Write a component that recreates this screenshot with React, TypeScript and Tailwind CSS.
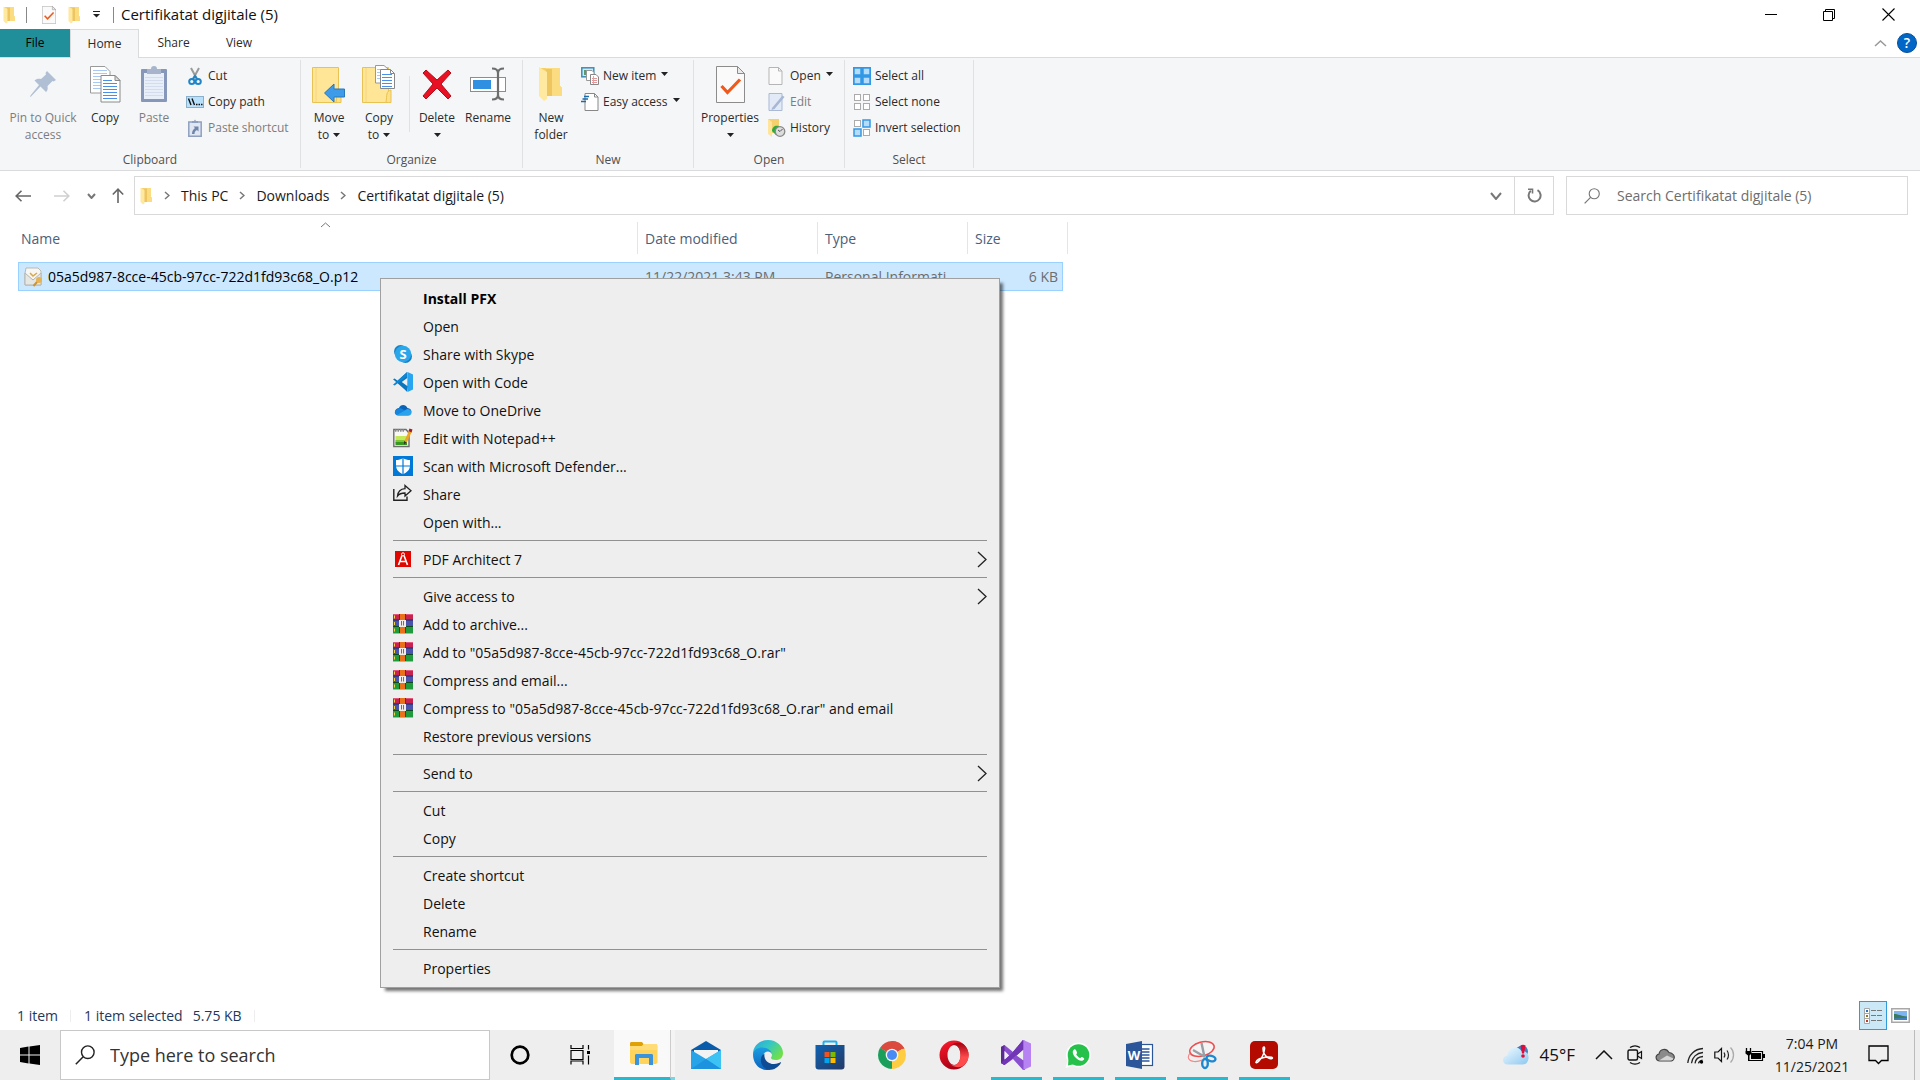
import React from "react";

type Kids = { children?: React.ReactNode };

function Svg({ w, h, box, children }: Kids & { w: number; h: number; box?: string }) {
  return (
    <svg width={w} height={h} viewBox={box ?? `0 0 ${w} ${h}`} fill="none" className="block shrink-0" aria-hidden="true">
      {children}
    </svg>
  );
}

/* ---------- shared small drawings ---------- */

function Folder({ w, h }: { w: number; h: number }) {
  return (
    <Svg w={w} h={h} box="0 0 26 36">
      <path d="M2 2H22V20L24 22V30H6Z" fill="#f4cf68" />
      <path d="M8 2H22V20L24 22V30H8Z" fill="#fbdc80" />
      <path d="M8 3H14V30H8Z" fill="#edc660" />
      <path d="M1 1L9 6V33L6 35L1 30Z" fill="#ffe8a0" />
    </Svg>
  );
}

function Caret() {
  return (
    <Svg w={7} h={4}>
      <path d="M0 0H7L3.5 4Z" fill="#222" />
    </Svg>
  );
}

function Magnifier({ size, color }: { size: number; color: string }) {
  return (
    <Svg w={size} h={size} box="0 0 20 20">
      <circle cx="12.8" cy="7.2" r="6.3" stroke={color} strokeWidth="1.4" />
      <path d="M8.2 11.8L.8 19.2" stroke={color} strokeWidth="1.5" />
    </Svg>
  );
}

function Chevron({ dir, w, h, color, stroke = 1.5 }: { dir: "up" | "down" | "right"; w: number; h: number; color: string; stroke?: number }) {
  const d =
    dir === "up"
      ? `M1 ${h - 1}L${w / 2} 1L${w - 1} ${h - 1}`
      : dir === "down"
        ? `M1 1L${w / 2} ${h - 1}L${w - 1} 1`
        : `M1 1L${w - 1} ${h / 2}L1 ${h - 1}`;
  return (
    <Svg w={w} h={h}>
      <path d={d} stroke={color} strokeWidth={stroke} />
    </Svg>
  );
}

/* ---------- ribbon drawings ---------- */

const PageLines = ({ x, y, n, w, c }: { x: number; y: number; n: number; w: number; c: string }) => (
  <>
    {Array.from({ length: n }, (_, i) => (
      <path key={i} d={`M${x} ${y + i * 3}h${w}`} stroke={c} />
    ))}
  </>
);

function SheetPair({ w, h }: { w: number; h: number }) {
  return (
    <Svg w={w} h={h} box="0 0 31 37">
      <path d="M.5 .5H15L20 5.500V27H.5Z" fill="#fff" stroke="#9a9a9a" />
      <PageLines x={3} y={4.5} n={7} w={14} c="#a9c9f5" />
      <path d="M11 9.500H25L30 14.500V36H11Z" fill="#fff" stroke="#8a8a8a" />
      <path d="M25 9.500V14.500H30Z" fill="#ddd" stroke="#8a8a8a" />
      <PageLines x={13} y={14.5} n={1} w={9} c="#4a90e8" />
      <PageLines x={13} y={17.5} n={6} w={14} c="#4a90e8" />
    </Svg>
  );
}

const PinIcon = () => (
  <Svg w={28} h={28}>
    <path d="M18 1L27 10L24.500 11.500L23.500 11L18.500 16C19 19 18.500 21 17 22L11.500 16.500L2 26.500L1 27L1.500 25.500L10 15L5.500 10.500C7 9 9.500 8.500 12 9L17 4.500L16.500 3Z" fill="#b0bfd4" />
  </Svg>
);

const ClipboardIcon = () => (
  <Svg w={28} h={38}>
    <rect x="1" y="4" width="26" height="33" rx="1" fill="#8797b9" />
    <rect x="4" y="8" width="20" height="26" fill="#e9eff8" />
    <PageLines x={5} y={12.5} n={7} w={18} c="#d3dded" />
    <path d="M7 4H11C11 2 12 1 14 1S17 2 17 4H21V9H7Z" fill="#a7b4cc" />
  </Svg>
);

const CutIcon = () => (
  <Svg w={14} h={19}>
    <path d="M3 1L9 12M11 1L5 12" stroke="#9a9a9a" strokeWidth="2" />
    <circle cx="3.800" cy="14.500" r="2.600" stroke="#1e86c8" strokeWidth="2" />
    <circle cx="10.200" cy="14.500" r="2.600" stroke="#1e86c8" strokeWidth="2" />
    <path d="M5 12L7 9L9 12" stroke="#1e86c8" strokeWidth="2" />
  </Svg>
);

const CopyPathIcon = () => (
  <Svg w={18} h={12}>
    <rect x=".5" y=".5" width="17" height="11" fill="#b8e0fa" stroke="#8ab0cc" />
    <path d="M2.500 2.500L5 9M6 2.500L8.500 9" stroke="#111" strokeWidth="1.400" />
    <path d="M10 8.500h1.500M12.500 8.500h1.500M15 8.500h1.500" stroke="#111" strokeWidth="1.400" />
  </Svg>
);

const PasteShortcutIcon = () => (
  <Svg w={14} h={18}>
    <path d="M.8 3H13.200V17.200H.8Z" fill="#dfe7f3" stroke="#8fa0be" strokeWidth="1.500" />
    <path d="M4 4V2H6L7 .5L8 2H10V4Z" fill="#8fa0be" />
    <path d="M5.500 7.500H10.500V12.500L9 11C7 12 6.500 13 6.500 15H4C4 12 5 10.500 7 9Z" fill="#7085aa" />
  </Svg>
);

const YellowFolder = () => (
  <>
    <path d="M.5 2.500H26.500V37.500H.5Z" fill="#ffe596" stroke="#e8c252" />
    <path d="M4 3V37" stroke="#f3d680" />
    <path d="M26.500 37.500H24C25 30 24 26 29 25V37.500Z" fill="#fbe08a" stroke="#e8c252" />
  </>
);

const MoveToIcon = () => (
  <Svg w={34} h={38}>
    <YellowFolder />
    <path d="M12.500 28L22 19V24H32.500V32H22V37Z" fill="#3d9be9" stroke="#2778bd" />
  </Svg>
);

const CopyToIcon = () => (
  <Svg w={34} h={38}>
    <YellowFolder />
    <path d="M13.500 .5H22L26 4V18H13.500Z" fill="#fff" stroke="#999" />
    <PageLines x={15} y={4.5} n={4} w={8} c="#a9c9f5" />
    <path d="M18.500 4.500H28.500L32.500 8.500V23.500H18.500Z" fill="#fff" stroke="#888" />
    <path d="M28.500 4.500V8.500H32.500" stroke="#888" />
    <PageLines x={20} y={9.5} n={5} w={10} c="#4a90e8" />
  </Svg>
);

const DeleteIcon = () => (
  <Svg w={32} h={32}>
    <path d="M2 5L5 2L16 12L27 2L30 5L20 16L30 28L27 31L16 20L5 31L2 28L12 16Z" fill="#e81123" stroke="#b50d1a" />
  </Svg>
);

const RenameIcon = () => (
  <Svg w={36} h={34}>
    <rect x=".5" y="10.500" width="35" height="14" fill="#fff" stroke="#8d8d8d" />
    <rect x="3" y="13" width="18" height="9" fill="#2f8fe0" />
    <path d="M22 1.500C26 1.500 28 3 28 6V28C28 31 26 32.500 22 32.500M34 1.500C30 1.500 28 3 28 6M28 28C28 31 30 32.500 34 32.500" stroke="#6d6d6d" strokeWidth="2.200" />
  </Svg>
);

const NewItemIcon = () => (
  <Svg w={18} h={18}>
    <rect x=".8" y=".8" width="12" height="9" fill="#cfe9f8" stroke="#3d8db8" strokeWidth="1.500" />
    <rect x="3" y="3" width="3" height="5" fill="#5b9a70" />
    <path d="M5.500 3.500H11L13 5.500V13.500H5.500Z" fill="#fff" stroke="#999" />
    <path d="M9.500 7.500H15L17.500 10V17.500H9.500Z" fill="#fff" stroke="#888" />
    <path d="M11 11.500h5M11 13.500h5M11 15.500h5" stroke="#d99" />
    <path d="M12.500 9V17" stroke="#9bd" />
  </Svg>
);

const EasyAccessIcon = () => (
  <Svg w={18} h={18}>
    <path d="M4 .5H13.500L17 4V17.500H4Z" fill="#fff" stroke="#888" />
    <path d="M13.500 .5V4H17" stroke="#888" />
    <path d="M3 3.500H8M1.500 6H7M0 8.500H5" stroke="#1c6aa8" strokeWidth="1.300" />
  </Svg>
);

const PropertiesIcon = ({ w, h }: { w: number; h: number }) => (
  <Svg w={w} h={h} box="0 0 29 37">
    <path d="M.5 .5H21.500L28.500 7.500V36.500H.5Z" fill="#fafafa" stroke="#8c8c8c" />
    <path d="M21.500 .5V7.500H28.500Z" fill="#eaeaea" stroke="#8c8c8c" />
    <path d="M5.500 20L11.500 26.500L24 13.500" stroke="#f0591c" strokeWidth="3.200" />
  </Svg>
);

const OpenDocIcon = () => (
  <Svg w={18} h={18}>
    <path d="M1 .5H10.500L14 4V17.500H1Z" fill="#fafafa" stroke="#b5b5b5" />
    <path d="M10.500 .5V4H14" stroke="#b5b5b5" />
  </Svg>
);

const EditDocIcon = () => (
  <Svg w={18} h={18}>
    <path d="M1 .5H14V17.500H1Z" fill="#e3eaf7" stroke="#a9b9d6" />
    <path d="M4 15L14.500 2.500L16.500 4L6.500 16L3.500 17Z" fill="#a7b7d4" />
  </Svg>
);

const HistoryIcon = () => (
  <Svg w={18} h={18}>
    <path d="M0 0H11V14H0Z" fill="#f6d06c" />
    <path d="M0 0L4 3V18L0 15Z" fill="#ffe59b" />
    <path d="M4 12C4 8 7 6 11 7L12 10L8 16Z" fill="#2bac3c" />
    <circle cx="12" cy="12.500" r="4.800" fill="#ddd" stroke="#888" strokeWidth="1.300" />
    <path d="M12 12.500L14.500 10M12 12.500L10 11" stroke="#555" />
  </Svg>
);

function FourSquares({ on, solid }: { on: boolean[]; solid?: boolean }) {
  const pts = [[0, 0], [9, 0], [0, 9], [9, 9]];
  return (
    <Svg w={18} h={18}>
      {solid && <rect width="18" height="18" fill="#3398e6" />}
      {pts.map(([x, y], i) =>
        on[i] ? (
          <rect key={i} x={x + 1} y={y + 1} width="7" height="7" fill="#b5ddfb" stroke="#3398e6" strokeWidth="1.500" />
        ) : (
          <rect key={i} x={x + 1.5} y={y + 1.5} width="6" height="6" fill="#fff" stroke="#ababab" />
        )
      )}
    </Svg>
  );
}

/* ---------- ribbon layout ---------- */

function BigButton({ icon, lines, width, muted, caret }: { icon: React.ReactNode; lines: string[]; width: string; muted?: boolean; caret?: boolean }) {
  return (
    <button className={`flex shrink-0 flex-col items-center ${width} ${muted ? "text-[#7d7d7d]" : "text-[#2b2b2b]"}`}>
      <span className="flex h-[49px] items-center justify-center pb-px">{icon}</span>
      {lines.map((l, i) => (
        <span key={l} className="flex h-[17px] items-center gap-1 whitespace-nowrap leading-[17px]">
          {l}
          {caret && i === lines.length - 1 && <Caret />}
        </span>
      ))}
    </button>
  );
}

function SmallButton({ icon, text, muted, caret }: { icon: React.ReactNode; text: string; muted?: boolean; caret?: boolean }) {
  return (
    <button className={`flex h-[26px] items-center gap-1 whitespace-nowrap ${muted ? "text-[#7d7d7d]" : "text-[#2b2b2b]"}`}>
      <span className="flex w-[18px] justify-center">{icon}</span>
      {text}
      {caret && <span className="pb-1 pl-px"><Caret /></span>}
    </button>
  );
}

function Group({ label, width, children }: Kids & { label: string; width: string }) {
  return (
    <section aria-label={label} className={`my-[2px] flex shrink-0 flex-col justify-between border-r border-[#e0e1e2] ${width}`}>
      <div className="flex">{children}</div>
      <div className="text-center leading-4 text-[#505050]">{label}</div>
    </section>
  );
}

const Stack = ({ children }: Kids) => <div className="flex flex-col pl-0.5 pt-[3px]">{children}</div>;

function Ribbon() {
  return (
    <div className="flex h-[114px] border-y border-[#dadbdc] bg-[#f5f6f7] text-xs">
      <Group label="Clipboard" width="w-[301px]">
        <BigButton icon={<PinIcon />} lines={["Pin to Quick", "access"]} width="w-[86px]" muted />
        <BigButton icon={<SheetPair w={31} h={37} />} lines={["Copy"]} width="w-[38px]" />
        <BigButton icon={<ClipboardIcon />} lines={["Paste"]} width="w-[60px]" muted />
        <Stack>
          <SmallButton icon={<CutIcon />} text="Cut" />
          <SmallButton icon={<CopyPathIcon />} text="Copy path" />
          <SmallButton icon={<PasteShortcutIcon />} text="Paste shortcut" muted />
        </Stack>
      </Group>
      <Group label="Organize" width="w-[222px]">
        <BigButton icon={<MoveToIcon />} lines={["Move", "to"]} width="w-14" caret />
        <BigButton icon={<CopyToIcon />} lines={["Copy", "to"]} width="w-11" caret />
        <div className="ml-2 mt-4 h-14 w-px bg-[#e0e1e2]" />
        <BigButton icon={<DeleteIcon />} lines={["Delete", ""]} width="w-[54px]" caret />
        <BigButton icon={<RenameIcon />} lines={["Rename"]} width="w-12" />
      </Group>
      <Group label="New" width="w-[171px]">
        <BigButton icon={<Folder w={26} h={36} />} lines={["New", "folder"]} width="w-14" />
        <Stack>
          <SmallButton icon={<NewItemIcon />} text="New item" caret />
          <SmallButton icon={<EasyAccessIcon />} text="Easy access" caret />
        </Stack>
      </Group>
      <Group label="Open" width="w-[151px]">
        <BigButton icon={<PropertiesIcon w={29} h={37} />} lines={["Properties", ""]} width="w-[72px]" caret />
        <Stack>
          <SmallButton icon={<OpenDocIcon />} text="Open" caret />
          <SmallButton icon={<EditDocIcon />} text="Edit" muted />
          <SmallButton icon={<HistoryIcon />} text="History" />
        </Stack>
      </Group>
      <Group label="Select" width="w-[129px]">
        <div className="pl-1.5">
          <Stack>
            <SmallButton icon={<FourSquares on={[true, true, true, true]} solid />} text="Select all" />
            <SmallButton icon={<FourSquares on={[false, false, false, false]} />} text="Select none" />
            <SmallButton icon={<FourSquares on={[false, true, true, false]} />} text="Invert selection" />
          </Stack>
        </div>
      </Group>
    </div>
  );
}

/* ---------- window frame ---------- */

function TitleBar() {
  return (
    <header className="flex h-[29px] items-center pl-[3px]">
      <Folder w={13} h={18} />
      <div className="ml-2.5 h-4 w-px bg-[#888]" />
      <button aria-label="Properties" className="ml-[15px]"><PropertiesIcon w={14} h={18} /></button>
      <button aria-label="New folder" className="ml-3"><Folder w={13} h={18} /></button>
      <button aria-label="Customize toolbar" className="ml-3">
        <Svg w={7} h={7}>
          <path d="M0 .5H7" stroke="#222" />
          <path d="M0 3H7L3.500 6.500Z" fill="#222" />
        </Svg>
      </button>
      <div className="ml-[13px] h-4 w-px bg-[#888]" />
      <h1 className="ml-[7px] text-[15px] text-[#111]">Certifikatat digjitale (5)</h1>
      <div className="ml-auto flex self-stretch">
        <button aria-label="Minimize" className="flex w-[58px] items-center justify-center"><Svg w={12} h={12}><path d="M0 5.500H12" stroke="#000" /></Svg></button>
        <button aria-label="Restore" className="flex w-[58px] items-center justify-center">
          <Svg w={12} h={12}>
            <path d="M.5 2.500H9.500V11.500H.5ZM2.500 2.500V.5H11.500V9.500H9.500" stroke="#000" />
          </Svg>
        </button>
        <button aria-label="Close" className="flex w-[62px] items-center justify-center pr-0.5"><Svg w={13} h={13}><path d="M.5 .5L12.500 12.500M12.500 .5L.5 12.500" stroke="#000" strokeWidth="1.100" /></Svg></button>
      </div>
    </header>
  );
}

function Tabs() {
  return (
    <nav className="flex h-7 text-xs text-[#2b2b2b]">
      <button className="w-[70px] bg-[#218f9a] text-black">File</button>
      <button className="relative -mb-px w-[69px] border border-b-0 border-[#dadbdc] bg-[#f5f6f7] pb-px">Home</button>
      <button className="w-[69px]">Share</button>
      <button className="w-[62px]">View</button>
      <div className="ml-auto flex items-center gap-2.5 pr-[3px]">
        <button aria-label="Collapse ribbon"><Chevron dir="up" w={13} h={7} color="#999" /></button>
        <button aria-label="Help" className="flex size-5 items-center justify-center rounded-full border border-[#0a4f96] bg-[#0067c8] text-sm font-semibold leading-none text-white">?</button>
      </div>
    </nav>
  );
}

function Crumb({ text }: { text: string }) {
  return (
    <>
      <Chevron dir="right" w={6} h={9} color="#777" />
      <a href="#" className="text-[#1a1a1a]">{text}</a>
    </>
  );
}

function AddressRow() {
  return (
    <div className="flex items-center pt-[5px] pr-3 text-sm">
      <div className="flex w-[134px] items-center">
        <button aria-label="Back" className="ml-[15px]"><Svg w={16} h={12}><path d="M6.500 .8L1.200 6L6.500 11.200M1.200 6H16" stroke="#666" strokeWidth="1.600" /></Svg></button>
        <button aria-label="Forward" className="ml-[23px]"><Svg w={16} h={12}><path d="M9.500 .8L14.800 6L9.500 11.200M14.800 6H0" stroke="#d0d0d0" strokeWidth="1.600" /></Svg></button>
        <button aria-label="Recent locations" className="ml-[17px]"><Chevron dir="down" w={9} h={6} color="#777" stroke={2} /></button>
        <button aria-label="Up" className="ml-4"><Svg w={12} h={15}><path d="M.8 6.500L6 1.200L11.200 6.500M6 1.200V15" stroke="#666" strokeWidth="1.600" /></Svg></button>
      </div>
      <div className="flex h-[39px] flex-1 items-center border border-[#d9d9d9]">
        <div className="flex items-center gap-[11px] pl-[5px]">
          <Folder w={13} h={18} />
          <Crumb text="This PC" />
          <Crumb text="Downloads" />
          <Crumb text="Certifikatat digjitale (5)" />
        </div>
        <button aria-label="Previous locations" className="ml-auto mr-3"><Chevron dir="down" w={12} h={8} color="#777" stroke={2} /></button>
        <button aria-label="Refresh" className="flex w-[39px] items-center justify-center self-stretch border-l border-[#d9d9d9]">
          <Svg w={15} h={15}>
            <path d="M3.800 2.800A6 6 0 1 0 10.500 2.200" stroke="#777" strokeWidth="2" />
            <path d="M1 1.200H5.500V5.500" stroke="#777" strokeWidth="1.600" />
          </Svg>
        </button>
      </div>
      <label className="ml-3 flex h-[39px] w-[342px] items-center gap-[17px] border border-[#d9d9d9] pl-[17px]">
        <Magnifier size={16} color="#777" />
        <input aria-label="Search folder" placeholder="Search Certifikatat digjitale (5)" className="min-w-0 flex-1 outline-none placeholder:text-[#6d6d6d]" />
      </label>
    </div>
  );
}

/* ---------- file list ---------- */

function FileTable() {
  const head = "h-8 border-r border-[#e5e5e5] px-[7px] pb-0 pt-0.5 text-left font-normal text-[#4c607a]";
  const cell = "h-[29px] whitespace-nowrap border-y border-[#99d1ff] bg-[#cce8ff] px-[7px] py-0 text-[#6d6d6d]";
  return (
    <table className="ml-[18px] mt-[7px] w-[1050px] table-fixed border-separate border-spacing-0 text-sm">
      <colgroup>
        <col className="w-[620px]" />
        <col className="w-[180px]" />
        <col className="w-[150px]" />
        <col className="w-[95px]" />
        <col className="w-[5px]" />
      </colgroup>
      <thead>
        <tr>
          <th className="relative h-8 border-r border-[#e5e5e5] pb-0 pl-[3px] pt-0.5 text-left font-normal text-[#4c607a]">
            Name
            <span className="absolute inset-x-0 top-0 flex justify-center pr-1"><Chevron dir="up" w={11} h={6} color="#777" stroke={1} /></span>
          </th>
          <th className={head}>Date modified</th>
          <th className={head}>Type</th>
          <th className={head} colSpan={2}>Size</th>
        </tr>
        <tr><td colSpan={5} className="h-2 p-0" /></tr>
      </thead>
      <tbody>
        <tr>
          <td className="h-[29px] border border-r-0 border-[#99d1ff] bg-[#cce8ff] py-0 pl-[5px] text-black">
            <span className="flex items-center gap-[5px]">
              <Svg w={19} h={20}>
                <path d="M2 1H14L17 4V18H1V6Z" fill="#f6f6f4" stroke="#b9b9b3" />
                <path d="M1 6L9 13L17 6V18H1Z" fill="#e6e6e2" stroke="#b5b5ae" />
                <path d="M6 6L9 9L13 6" stroke="#d9a648" strokeWidth="1.500" />
                <circle cx="15" cy="13" r="3" fill="#e6b353" />
                <path d="M13 15L9.500 19" stroke="#cf9432" strokeWidth="2" />
              </Svg>
              05a5d987-8cce-45cb-97cc-722d1fd93c68_O.p12
            </span>
          </td>
          <td className={cell}>11/22/2021 3:43 PM</td>
          <td className={cell}>Personal Informati...</td>
          <td className="h-[29px] border border-l-0 border-[#99d1ff] bg-[#cce8ff] py-0 pr-1 text-right text-[#6d6d6d]">6 KB</td>
          <td />
        </tr>
      </tbody>
    </table>
  );
}

/* ---------- context menu ---------- */

const SkypeIcon = () => (
  <Svg w={20} h={20}>
    <circle cx="7.500" cy="7.500" r="6.500" fill="#1482c9" />
    <circle cx="12.500" cy="12.500" r="6.500" fill="#1482c9" />
    <circle cx="10" cy="10" r="8.200" fill="#2aa7ea" />
    <text x="10" y="14.500" textAnchor="middle" fontSize="13" fontWeight="700" fill="#fff">S</text>
  </Svg>
);

const CodeIcon = () => (
  <Svg w={20} h={20} box="0 0 24 24">
    <path d="M17 0L5.500 10.500L2 7.800L0 8.800L14 21L17 24L18 17Z" fill="#0b76bd" />
    <path d="M0 15.200L2 16.200L17 5V0L6 10Z" fill="#0f86d2" />
    <path d="M17.500 7L10.500 12L17.500 17Z" fill="#eee" />
    <path d="M17.500 0L24 3V21L17.500 24Z" fill="#27a5f0" />
  </Svg>
);

const OneDriveIcon = () => (
  <Svg w={18} h={12}>
    <path d="M5 4C6 .5 11.500 -.5 13.500 4C17 4.500 18 7 17 9L10 7L3 11C0 9.500 0 5 5 4Z" fill="#0a63b8" />
    <path d="M2 6C4 3.500 7 4 9 5.500L16 9L14.500 11.500H4C.5 11 0 8 2 6Z" fill="#1685dc" />
    <path d="M3 11L10 7L13 5C16 5 17.800 6.500 17.500 9C17 11 16 11.500 14 11.500H4Z" fill="#2aa3ec" />
  </Svg>
);

const NotepadIcon = () => (
  <Svg w={20} h={20}>
    <path d="M.8 1.500H13L16 5V18.500H.8Z" fill="#f8f8f4" stroke="#6d6d6d" strokeWidth="1.400" />
    <path d="M2 2.500H12" stroke="#8a8a8a" strokeWidth="2.500" strokeDasharray="1.500 1" />
    <path d="M2.500 8H14V16.500H2.500Z" fill="#c4e85a" />
    <path d="M2.500 12H14V14.500H2.500Z" fill="#7cc63c" />
    <path d="M2.500 14H14V17H2.500Z" fill="#37981f" />
    <path d="M17.500 3L12.500 14" stroke="#f0a422" strokeWidth="3" />
    <path d="M16.500 .5L19.500 1.500L18.500 4.500L15.500 3Z" fill="#a01c28" />
    <path d="M11 13L13.500 14.500L11 16.500Z" fill="#333" />
  </Svg>
);

const DefenderIcon = () => (
  <Svg w={20} h={20}>
    <rect width="20" height="20" fill="#0078d7" />
    <path d="M10 2C12 3.500 14.500 4 17 4V9C17 14 14 16.500 10 18.200C6 16.500 3 14 3 9V4C5.500 4 8 3.500 10 2Z" fill="#fff" />
    <path d="M10 2V18.500M2.500 10H17.500" stroke="#0078d7" strokeWidth="1.200" />
  </Svg>
);

const ShareIcon = () => (
  <Svg w={20} h={20}>
    <path d="M.8 5V16.200H14V12.500" stroke="#222" strokeWidth="1.400" />
    <path d="M12 1.500L18 6.800L12 12V9C8 9 6 10 4.500 12C5 7.500 8 5 12 4.700Z" stroke="#222" strokeWidth="1.300" />
  </Svg>
);

const ArchitectIcon = () => (
  <Svg w={16} h={16}>
    <rect width="16" height="16" fill="#e10600" />
    <path d="M3.500 14L7 4.500M12.500 14L9 4.500M5 10.500H11" stroke="#fff" strokeWidth="1.600" />
    <circle cx="8" cy="3.300" r="1.500" stroke="#fff" />
  </Svg>
);

const RarIcon = () => (
  <Svg w={20} h={20}>
    <rect y="0" width="20" height="6" fill="#c8234f" />
    <rect y="0" width="20" height="1" fill="#e2587c" />
    <rect y="6" width="20" height="7" fill="#4a53ae" />
    <rect y="5.500" width="20" height="1" fill="#20265f" />
    <rect y="13" width="20" height="6" fill="#1f9a3d" />
    <rect y="12" width="20" height="1" fill="#0e4a22" />
    <path d="M1.500 1.500V4.500M1.500 8V11M1.500 14.500V17.500" stroke="#f2d04a" />
    <rect x="7" y="0" width="5" height="19" fill="#e8711a" />
    <path d="M6.500 0V19M12.500 0V19" stroke="#6e2a10" />
    <rect x="6" y="6" width="7" height="7" fill="#f3ece6" />
    <path d="M8.500 7V11.500M10.500 7V11.500" stroke="#d2492b" />
    <path d="M0 19.500H20" stroke="#a8b8a8" />
  </Svg>
);

type Item = { text: string; icon?: React.ReactNode; bold?: boolean; sub?: boolean };

const menu: Item[][] = [
  [
    { text: "Install PFX", bold: true },
    { text: "Open" },
    { text: "Share with Skype", icon: <SkypeIcon /> },
    { text: "Open with Code", icon: <CodeIcon /> },
    { text: "Move to OneDrive", icon: <OneDriveIcon /> },
    { text: "Edit with Notepad++", icon: <NotepadIcon /> },
    { text: "Scan with Microsoft Defender...", icon: <DefenderIcon /> },
    { text: "Share", icon: <ShareIcon /> },
    { text: "Open with..." },
  ],
  [{ text: "PDF Architect 7", icon: <ArchitectIcon />, sub: true }],
  [
    { text: "Give access to", sub: true },
    { text: "Add to archive...", icon: <RarIcon /> },
    { text: 'Add to "05a5d987-8cce-45cb-97cc-722d1fd93c68_O.rar"', icon: <RarIcon /> },
    { text: "Compress and email...", icon: <RarIcon /> },
    { text: 'Compress to "05a5d987-8cce-45cb-97cc-722d1fd93c68_O.rar" and email', icon: <RarIcon /> },
    { text: "Restore previous versions" },
  ],
  [{ text: "Send to", sub: true }],
  [{ text: "Cut" }, { text: "Copy" }],
  [{ text: "Create shortcut" }, { text: "Delete" }, { text: "Rename" }],
  [{ text: "Properties" }],
];

function ContextMenu() {
  return (
    <div role="menu" className="absolute left-[380px] top-[278px] w-[620px] border border-[#a0a0a0] bg-[#eee] px-3 py-[5px] text-sm text-[#111] shadow-[4px_4px_3px_-1px_rgba(0,0,0,0.55)]">
      {menu.map((group, g) => (
        <div key={g}>
          {g > 0 && <div className="my-1 h-px bg-[#919191]" />}
          {group.map((it) => (
            <button key={it.text} role="menuitem" className={`flex h-7 w-full items-center gap-2.5 text-left ${it.bold ? "font-bold text-black" : ""}`}>
              <span className="flex w-5 justify-center">{it.icon}</span>
              <span className="pt-0.5">{it.text}</span>
              {it.sub && <span className="ml-auto"><Chevron dir="right" w={10} h={17} color="#222" stroke={1.3} /></span>}
            </button>
          ))}
        </div>
      ))}
    </div>
  );
}

/* ---------- status bar ---------- */

function StatusBar() {
  return (
    <footer className="flex h-[29px] items-center pl-[17px] pr-[10px] text-sm text-[#1e395b]">
      <span>1 item</span>
      <span className="ml-3 h-3 w-px bg-[#eee]" />
      <span className="ml-[13px]">1 item selected</span>
      <span className="ml-2.5">5.75 KB</span>
      <span className="ml-3 h-3 w-px bg-[#eee]" />
      <div className="ml-auto flex items-center gap-1">
        <button aria-label="Details view" className="flex h-[29px] w-7 items-center justify-center border border-[#2f9bd8] bg-[#cbe8f6]">
          <Svg w={18} h={16}>
            <path d="M.5 .5H5.500V15.500H.5ZM.5 5.500H5.500M.5 10.500H5.500" stroke="#a8a8a8" fill="#fff" />
            <rect x="2" y="2" width="2" height="2" fill="#2f6fc0" />
            <rect x="2" y="7" width="2" height="2" fill="#8a7a20" />
            <rect x="2" y="12" width="2" height="2" fill="#c0392b" />
            <path d="M7 2.500h5M13 2.500h5M7 7.500h5M13 7.500h5M7 12.500h5M13 12.500h5" stroke="#777" />
          </Svg>
        </button>
        <button aria-label="Large icons view">
          <Svg w={19} h={15}>
            <rect x=".75" y=".75" width="17.500" height="13.500" fill="#fff" stroke="#a8a8a8" strokeWidth="1.500" />
            <rect x="3" y="3" width="13" height="9" fill="#7db4f2" />
            <path d="M3 6C7 6 10 8 16 8.500V12H3Z" fill="#3d7a5c" />
            <path d="M3 10.500L16 9.500V12H3Z" fill="#3f7fc4" />
          </Svg>
        </button>
      </div>
    </footer>
  );
}

/* ---------- taskbar ---------- */

const ExplorerIcon = () => (
  <Svg w={28} h={24}>
    <path d="M0 1.500C0 .5 .5 0 1.500 0H12L13.500 2V8H0Z" fill="#dfa106" />
    <path d="M0 4H12L14 2H26L27.500 3.500V20.500L26 22H1.500L0 20.500Z" fill="#ffd45c" />
    <path d="M0 4H12L14 2H27V8H0Z" fill="#ffdc75" />
    <path d="M5 13.500C5 12.500 5.500 12 6.500 12H21.500C22.500 12 23 12.500 23 13.500V23H19V16H9V23H5Z" fill="#3b93dc" />
  </Svg>
);

const MailIcon = () => (
  <Svg w={30} h={28}>
    <path d="M0 9L15 0L30 9V14H0Z" fill="#0a5cab" />
    <path d="M3 9H27V20H3Z" fill="#f3f3f3" />
    <path d="M0 9L15 18L30 9V28H0Z" fill="#27a4e8" />
    <path d="M30 9V28L15 18Z" fill="#3cc3f3" />
    <path d="M0 28L15 18L30 28Z" fill="#1d93e0" />
  </Svg>
);

const EdgeIcon = () => (
  <Svg w={30} h={30}>
    <defs>
      <linearGradient id="eg1" x1="0" y1="0" x2="1" y2=".6"><stop stopColor="#2aa5e0" /><stop offset=".5" stopColor="#35c7c4" /><stop offset="1" stopColor="#6fe04a" /></linearGradient>
      <linearGradient id="eg2" x1="0" y1="0" x2="0" y2="1"><stop stopColor="#1b9de2" /><stop offset="1" stopColor="#0c62bd" /></linearGradient>
    </defs>
    <path d="M0 14C0 6 6.500 0 15 0C24 0 30 6.500 30 13C30 17.500 27 20 23 20C20 20 18 19 18 18C18 17 19 16.500 19 14.500C19 12 16.500 10 13.500 10Z" fill="url(#eg1)" />
    <path d="M0 14.500C.5 10 4.500 7.500 9 7.500C15 7.500 19 11 19 14.500C18 11.500 14.500 10.500 12 12.500C7.500 16 9 25 16.500 30C7 31 0 24 0 14.500Z" fill="url(#eg2)" />
    <path d="M11.500 13.500C10.500 19 14.500 24 21 24C24 24 26.500 22.800 27.500 22.200C28 22 28.200 22.300 28 22.800C25.500 27.500 21 30 16 30C10 28.500 7 23 8 18.500C8.500 16 10 14.500 11.500 13.500Z" fill="#0d4b94" />
  </Svg>
);

const StoreIcon = () => (
  <Svg w={30} h={30}>
    <defs><linearGradient id="st" x1="0" y1="0" x2="1" y2="1"><stop stopColor="#0f62b2" /><stop offset="1" stopColor="#243a66" /></linearGradient></defs>
    <path d="M8.500 6V2.500C8.500 2 9 1.500 9.500 1.500H20.500C21 1.500 21.500 2 21.500 2.500V6" stroke="#1fb0ee" strokeWidth="2" />
    <path d="M.5 5H29.500V26.500C29.500 28.500 28.500 29.500 26.500 29.500H3.500C1.500 29.500 .5 28.500 .5 26.500Z" fill="url(#st)" />
    <rect x="9.500" y="12" width="5" height="5" fill="#f4511e" />
    <rect x="15.500" y="12" width="5" height="5" fill="#7fba00" />
    <rect x="9.500" y="18" width="5" height="5" fill="#00a4ef" />
    <rect x="15.500" y="18" width="5" height="5" fill="#ffb900" />
  </Svg>
);

const ChromeIcon = () => (
  <Svg w={28} h={28}>
    <path d="M14 14L1.900 7A14 14 0 0 1 26.100 7Z" fill="#db4a3e" />
    <path d="M14 14L26.100 7A14 14 0 0 1 14 28Z" fill="#ffcd42" />
    <path d="M14 14L14 28A14 14 0 0 1 1.900 7Z" fill="#1a9f5b" />
    <path d="M14 7.800H26.500L26.100 7A14 14 0 0 0 14 0Z" fill="#db4a3e" />
    <path d="M19.400 17.100L13.500 28H15L21 16Z" fill="#ffcd42" />
    <path d="M8.600 17.100L2 6.800L6 9.500Z" fill="#1a9f5b" />
    <circle cx="14" cy="14" r="6.300" fill="#f5f5f5" />
    <circle cx="14" cy="14" r="5" fill="#4a8af4" />
  </Svg>
);

const OperaIcon = () => (
  <Svg w={30} h={30}>
    <defs>
      <linearGradient id="op1" x1="0" y1="0" x2=".4" y2="1"><stop stopColor="#ff1b2d" /><stop offset="1" stopColor="#a70014" /></linearGradient>
      <linearGradient id="op2" x1="0" y1="0" x2="0" y2="1"><stop stopColor="#a30010" /><stop offset=".6" stopColor="#ff4b4b" /></linearGradient>
    </defs>
    <path fillRule="evenodd" d="M15 .5A14.500 14.500 0 1 0 15 29.500A14.500 14.500 0 1 0 15 .5ZM15.500 5C19 5 21.500 9.500 21.500 15S19 25 15.500 25S8.500 21 8.500 15S12 5 15.500 5Z" fill="url(#op1)" />
    <path d="M10.500 6.500C13 3.500 19 1 24.500 4.200C31.500 10.500 31.500 19.500 24.500 25.800C20 28.500 14 27 10.500 23.500C17 28 21.500 22 21.500 15S17 2 10.500 6.500Z" fill="url(#op2)" />
  </Svg>
);

const VisualStudioIcon = () => (
  <Svg w={30} h={30}>
    <path fillRule="evenodd" d="M0 7L3.500 5L12 12L22 0L24 1V30L22 30L12 19L3.500 25L0 23ZM3.500 11V19.500L8 15.500ZM22.500 9.500L15.500 15.500L22.500 20.500Z" fill="#8a4fd0" />
    <path d="M0 7L3.500 5V25L0 23Z" fill="#5c2d91" />
    <path d="M12 12L22 0V9.500L8 21.500L3.500 25L0 23Z" fill="#7136b5" />
    <path d="M22 9.500L15.500 15.500L12 12L22 0Z" fill="#7136b5" />
    <path d="M22.500 0L30 3.500V26.500L22.500 30Z" fill="#b783f2" />
    <path d="M3.500 11V19.500L8 15.500Z" fill="#eee" />
  </Svg>
);

const WhatsAppIcon = () => (
  <Svg w={26} h={27}>
    <path d="M13.500 .5A12.500 12.500 0 1 1 7.500 24L.5 26L2.500 19A12.500 12.500 0 0 1 13.500 .5Z" fill="#fdfdfd" />
    <circle cx="13.500" cy="13" r="10.800" fill="#25c14b" />
    <path d="M3.500 16L3 23.500L10 22Z" fill="#25c14b" />
    <path d="M9 7.500C7 9 7.500 12 10 15C13 18.500 17 20 19 17.500C19.500 16.500 19 16 18 15.500C16.500 14.800 16.300 15 15.300 16.200C13.500 15.500 12 14 11.200 12.300C12 11.500 12.200 11 11.800 10C11 7.500 10.300 6.800 9 7.500Z" fill="#fff" />
  </Svg>
);

const WordIcon = () => (
  <Svg w={28} h={28}>
    <rect x="13" y="3.500" width="13.500" height="21" fill="#fff" stroke="#2b579a" strokeWidth="1.200" />
    <path d="M16 8H23.500M16 11H23.500M16 14H23.500M16 17H23.500M16 20H23.500" stroke="#2b579a" strokeWidth="1.300" />
    <path d="M0 3L16 0V28L0 25Z" fill="#2b579a" />
    <text x="8" y="18.500" textAnchor="middle" fontSize="13" fontWeight="700" fill="#fff">W</text>
  </Svg>
);

const SnipIcon = () => (
  <Svg w={30} h={30}>
    <ellipse cx="15" cy="9" rx="12.500" ry="7" transform="rotate(-15 15 9)" fill="#f4f4f4" stroke="#ee4d4d" strokeWidth="1.500" />
    <path d="M3 13C0 17 1 21 7 21.500C10 21.700 13 21 15 20" stroke="#f08a8a" strokeWidth="1.200" />
    <path d="M6 10L18 17M14.500 3L17.500 17" stroke="#9a9fa5" strokeWidth="2.400" />
    <ellipse cx="18" cy="23.500" rx="2.800" ry="4.500" stroke="#1e88cf" strokeWidth="2.400" />
    <ellipse cx="24" cy="18.500" rx="4.500" ry="2.700" transform="rotate(12 24 18.500)" stroke="#1e88cf" strokeWidth="2.400" />
  </Svg>
);

const AcrobatIcon = () => (
  <Svg w={28} h={28}>
    <rect width="28" height="28" rx="5" fill="#b30b00" />
    <path d="M6 21C7.500 17.500 15 15.500 21.500 16.200C24 17 21 18.800 18.500 17C15 15 13 11 13 7.500C13.300 5 15 5.500 14.500 8.500C14 12.500 11 18 8.500 20.500C7 22 5.500 22 6 21Z" stroke="#fff" strokeWidth="1.500" strokeLinejoin="round" />
  </Svg>
);

function TaskButton({ label, open, children }: Kids & { label: string; open?: boolean }) {
  return (
    <button aria-label={label} className="flex w-[62px] shrink-0 flex-col items-center">
      <span className="flex flex-1 items-center">{children}</span>
      <span className={`-mt-[3px] h-[3px] w-[51px] ${open ? "bg-[#2eb6cd]" : ""}`} />
    </button>
  );
}

function Taskbar() {
  return (
    <div className="flex h-[50px] bg-[#eee]">
      <button aria-label="Start" className="flex w-[60px] items-center justify-center">
        <Svg w={20} h={20}>
          <path d="M0 3L8.500 1.600V9.500H0ZM9.500 1.500L20 0V9.500H9.500ZM0 10.500H8.500V18.400L0 17ZM9.500 10.500H20V20L9.500 18.500Z" fill="#000" />
        </Svg>
      </button>
      <label className="flex w-[430px] items-center gap-[15px] border border-[#c8c8c8] bg-white pl-[14px]">
        <Magnifier size={20} color="#222" />
        <input aria-label="Search Windows" placeholder="Type here to search" className="min-w-0 flex-1 text-lg outline-none placeholder:text-[#333]" />
      </label>
      <button aria-label="Cortana" className="flex w-[60px] items-center justify-center">
        <Svg w={20} h={20}><circle cx="10" cy="10" r="8.300" stroke="#000" strokeWidth="2.700" /></Svg>
      </button>
      <button aria-label="Task view" className="flex w-[60px] items-center justify-center">
        <Svg w={21} h={20}>
          <path d="M1 0V3.500H13V0M1 5.500H13V14.500H1ZM1 19.500V16H13V19.500" stroke="#000" strokeWidth="1.200" />
          <path d="M18.500 0V4.500M18.500 10.500V19.500" stroke="#000" strokeWidth="1.200" />
          <rect x="17" y="6" width="3" height="3" fill="#000" />
        </Svg>
      </button>
      <div className="flex w-[65px] pl-1">
        <button aria-label="File Explorer" className="flex w-[57px] items-center justify-center border-b-[3px] border-r border-b-[#2eb6cd] border-r-[#ccc] bg-[#f9f9f9] pl-[3px]"><ExplorerIcon /></button>
        <span className="w-1 border-b-[3px] border-[#7fd3df] bg-[#f4f4f4]" />
      </div>
      <TaskButton label="Mail"><MailIcon /></TaskButton>
      <TaskButton label="Edge"><EdgeIcon /></TaskButton>
      <TaskButton label="Store"><StoreIcon /></TaskButton>
      <TaskButton label="Chrome"><ChromeIcon /></TaskButton>
      <TaskButton label="Opera"><OperaIcon /></TaskButton>
      <TaskButton label="Visual Studio" open><VisualStudioIcon /></TaskButton>
      <TaskButton label="WhatsApp" open><WhatsAppIcon /></TaskButton>
      <TaskButton label="Word" open><WordIcon /></TaskButton>
      <TaskButton label="Snipping Tool" open><SnipIcon /></TaskButton>
      <TaskButton label="Acrobat" open><AcrobatIcon /></TaskButton>
      <div className="ml-auto flex items-center">
        <button className="flex items-center gap-2.5 text-[17px] text-[#111]">
          <Svg w={28} h={22}>
            <defs><linearGradient id="cl" x1="0" y1="0" x2="1" y2="1"><stop stopColor="#f1faff" /><stop offset="1" stopColor="#8cc8f0" /></linearGradient></defs>
            <circle cx="20" cy="7.500" r="6" fill="#3a7fc0" />
            <path d="M6 20.500C-1 20 0 12 5.500 11.500C6 3 15.500 1 19.500 7C25 6 28 12 26 16.500C25 20 22 20.500 20 20.500Z" fill="url(#cl)" />
            <path d="M18.500 1.500C20 .5 22 .5 23.500 1.500L22 9.500H20Z" fill="#e00b38" />
            <circle cx="21" cy="12" r="1.800" fill="#e00b38" />
          </Svg>
          45°F
        </button>
        <button aria-label="Show hidden icons" className="ml-5"><Chevron dir="up" w={18} h={10} color="#111" /></button>
        <button aria-label="Meet now" className="ml-3.5">
          <Svg w={16} h={20}>
            <path d="M3 2.500C6 .5 10 .5 13 2.500M3 17.500C6 19.500 10 19.500 13 17.500" stroke="#111" strokeWidth="1.300" />
            <rect x="1" y="5" width="9.500" height="10" rx="1.500" stroke="#111" strokeWidth="1.400" />
            <path d="M10.500 9L14.500 6.500V13.500L10.500 11" stroke="#111" strokeWidth="1.200" />
          </Svg>
        </button>
        <button aria-label="OneDrive" className="ml-3">
          <Svg w={20} h={14}>
            <path d="M5 13C0 12.500 0 7 4 6C5 1 11 -.5 14 4.500C18 5 20 8 19 10.500C18 13 17 13 15 13Z" fill="#8a8a8a" stroke="#444" strokeWidth="1.200" />
            <path d="M4 12.500L12 7.500L18.500 10.500C18 12 17 12.500 15 12.500Z" fill="#d5d5d5" />
          </Svg>
        </button>
        <button aria-label="Network" className="ml-3">
          <Svg w={17} h={17}>
            <path d="M.8 16C1.500 8 7.500 2 16 1.500M4.500 16.200C5 10.500 9.500 6 16 5.500M8 16.300C8.500 12.500 11.500 9.800 16 9.500" stroke="#222" strokeWidth="1.300" />
            <path d="M11.500 16.300C12 14.500 13.500 13.500 15.500 13.200" stroke="#222" strokeWidth="1.300" />
            <circle cx="14.500" cy="15" r="1.700" fill="#000" />
          </Svg>
        </button>
        <button aria-label="Volume" className="ml-2.5">
          <Svg w={21} h={18}>
            <path d="M.8 6H4L7.500 2.500V15.500L4 12H.8Z" stroke="#111" strokeWidth="1.200" />
            <path d="M10 6.500C11 8 11 10 10 11.500M13 4.500C15 7 15 11 13 13.500" stroke="#222" strokeWidth="1.200" />
            <path d="M16.500 1.500C20.500 5.500 20.500 12.500 16.500 16.500" stroke="#aaa" strokeWidth="1.300" />
          </Svg>
        </button>
        <button aria-label="Battery" className="ml-2.5">
          <Svg w={20} h={15}>
            <path d="M1.500 0V3M5.500 0V3" stroke="#000" strokeWidth="1.300" />
            <path d="M.5 3H6.500V5.500L4.500 7.500V13H3V7.500L.5 5.500Z" fill="#000" />
            <path d="M7 3.500H17.500V12.500H3.500" stroke="#000" strokeWidth="1.200" />
            <rect x="6" y="5" width="10" height="6" fill="#000" />
            <rect x="18" y="6" width="2" height="4" fill="#000" />
          </Svg>
        </button>
        <div className="ml-[7px] w-20 text-center text-sm leading-[23px] text-[#1a1a1a]">
          <div>7:04 PM</div>
          <div>11/25/2021</div>
        </div>
        <button aria-label="Notifications" className="ml-4">
          <Svg w={22} h={20}>
            <path d="M1 1H20V15.500H13.500L10.500 18.500L7.500 15.500H1Z" stroke="#000" strokeWidth="1.300" />
          </Svg>
        </button>
        <span className="ml-6 h-[50px] w-px bg-[#bbb]" />
        <span className="w-[5px]" />
      </div>
    </div>
  );
}

export default function App() {
  return (
    <div className="relative flex min-h-screen flex-col bg-white font-['Open_Sans','Noto_Sans',sans-serif]">
      <TitleBar />
      <Tabs />
      <Ribbon />
      <AddressRow />
      <main className="flex-1">
        <FileTable />
      </main>
      <ContextMenu />
      <StatusBar />
      <Taskbar />
    </div>
  );
}
